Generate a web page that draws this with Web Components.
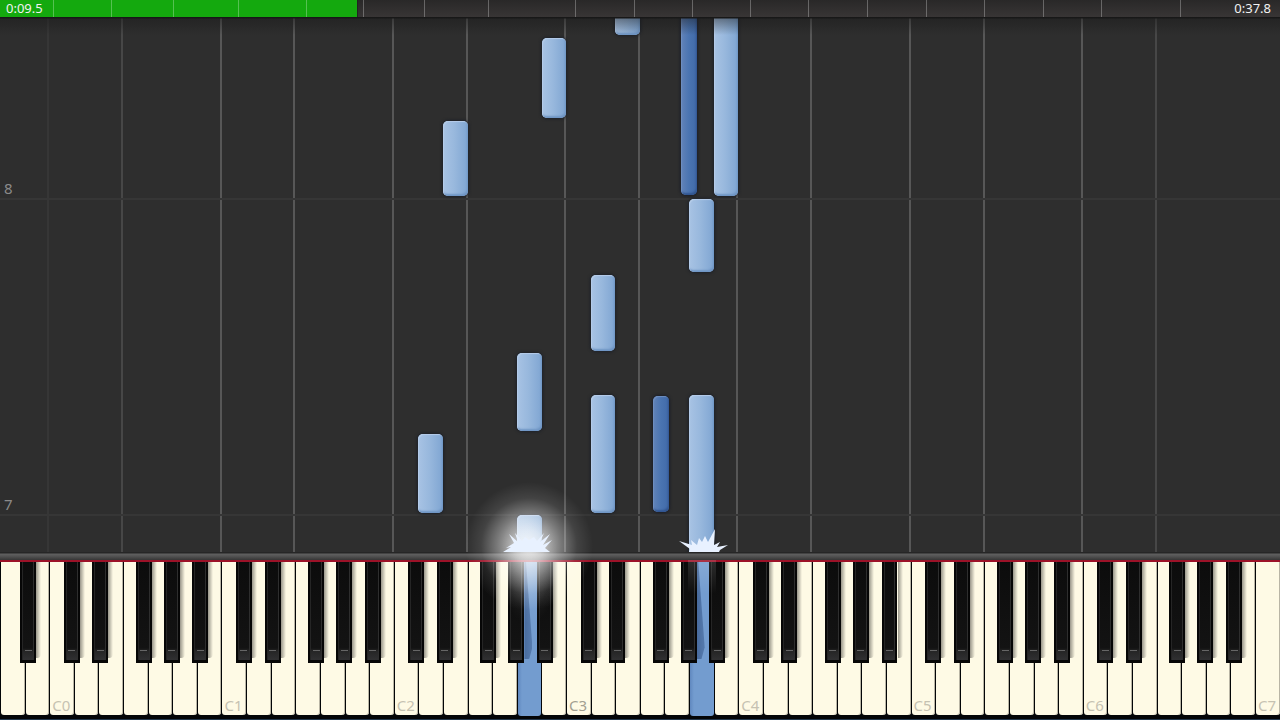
<!DOCTYPE html>
<html lang="en">
<head>
<meta charset="utf-8">
<title>Piano roll</title>
<style>
	body {
		margin: 0;
		background: #000;
		font-family: "Noto Sans", "Open Sans", sans-serif;
	}
</style>
</head>
<body>
<piano-player></piano-player>

<script>
const WHITE_KEYS = 52;
const NAMES = ['A', 'B', 'C', 'D', 'E', 'F', 'G'];
// where a sharp starts, as a share of the white key before it
const SHARPS = { C: 0.59, D: 0.75, F: 0.52, G: 0.66, A: 0.82 };

const keyName = (i) => NAMES[i % 7];
const toPercent = (keys) => `${(keys / WHITE_KEYS) * 100}%`;

class SongTimeline extends HTMLElement {
	constructor() {
		super();
		this.attachShadow({ mode: 'open' });
		const marks = [53, 111, 173, 238, 306, 363, 424, 488, 575, 634, 692,
			750, 808, 867, 926, 984, 1043, 1101, 1180];
		this.shadowRoot.innerHTML = `
			<style>
				:host {
					display: grid;
					height: 17px;
					color: #f2f2f2;
					font-size: 13px;
					line-height: 16px;
				}
				progress, svg, .times { grid-area: 1 / 1; width: 100%; height: 17px; }
				progress {
					appearance: none;
					border: 0;
					background: linear-gradient(#292828, #383535);
				}
				progress::-webkit-progress-bar { background: linear-gradient(#292828, #383535); }
				progress::-webkit-progress-value { background: #14a90e; border-right: 1px solid #222; }
				line { stroke: #fff; stroke-opacity: 0.28; }
				.times {
					display: flex;
					justify-content: space-between;
					box-sizing: border-box;
					padding: 0 9px 0 6px;
				}
			</style>
			<progress max="1280" value="358" aria-label="Song position"></progress>
			<svg viewBox="0 0 1280 17" preserveAspectRatio="none" aria-hidden="true">
				${marks.map((x) => `<line x1="${x + 0.5}" x2="${x + 0.5}" y1="0" y2="17"/>`).join('')}
			</svg>
			<div class="times"><span>${this.getAttribute('elapsed')}</span><span>${this.getAttribute('total')}</span></div>
		`;
	}
}

class RollNote extends HTMLElement {
	constructor() {
		super();
		this.attachShadow({ mode: 'open' });
		this.shadowRoot.innerHTML = `
			<style>
				:host {
					position: absolute;
					box-sizing: border-box;
					width: ${toPercent(1)};
					border-radius: 5px;
					background: linear-gradient(90deg, #a8c3e4, #98b8dd 45%, #7fa5d2);
					box-shadow: inset 1px 1px 1px #b6cdea, inset -1px -2px 2px #6f95c4, 0 0 3px 1px #1d2129;
				}
				:host([sharp]) {
					width: ${toPercent(0.65)};
					background: linear-gradient(90deg, #6283b8, #4a74b1 50%, #416aa9);
					box-shadow: inset 1px 1px 1px #6f8fc0, inset -1px -2px 2px #315590, 0 0 3px 1px #1b1e28;
				}
				:host([held]) {
					border-bottom-left-radius: 0;
					border-bottom-right-radius: 0;
				}
			</style>
		`;
	}

	connectedCallback() {
		const key = Number(this.getAttribute('key'));
		const sharp = this.hasAttribute('sharp') ? SHARPS[keyName(key)] : 0;
		this.style.left = toPercent(key + sharp);
		this.style.bottom = `${this.getAttribute('from')}px`;
		this.style.height = `${this.getAttribute('length')}px`;
	}
}

class NoteRoll extends HTMLElement {
	constructor() {
		super();
		this.attachShadow({ mode: 'open' });
		this.shadowRoot.innerHTML = `
			<style>
				:host {
					display: block;
					position: relative;
					overflow: hidden;
					background: #2e2e2e;
				}
				:host::after {
					content: '';
					position: absolute;
					inset: 0 0 auto;
					height: 18px;
					background: linear-gradient(#181818 1px, #18181870 2px, #18181800);
				}
				.lane {
					position: absolute;
					top: 0;
					bottom: 0;
					width: 2px;
					margin-left: -2px;
					background: #575757;
				}
				.lane.dim { background: #363636; }
				.lane.soft { background: #474747; }
				.bar {
					position: absolute;
					left: 0;
					right: 0;
					padding-left: 4px;
					border-bottom: 2px solid #363636;
					color: #8a8a8a;
					font-size: 15px;
					line-height: 20px;
				}
			</style>
			<div id="lanes"></div>
			<div class="bar" style="bottom: 352px">8</div>
			<div class="bar" style="bottom: 36px">7</div>
			<slot></slot>
		`;
	}

	connectedCallback() {
		const lanes = this.shadowRoot.querySelector('#lanes');
		for (let i = 1; i < WHITE_KEYS - 2; i++) {
			if (keyName(i) !== 'C' && keyName(i) !== 'F') continue;
			const lane = document.createElement('div');
			lane.className = i === 2 ? 'lane dim' : i === 5 || i > 46 ? 'lane soft' : 'lane';
			lane.style.left = toPercent(i);
			lanes.appendChild(lane);
		}
	}
}

class KeyRail extends HTMLElement {
	constructor() {
		super();
		this.attachShadow({ mode: 'open' });
		this.shadowRoot.innerHTML = `
			<style>
				:host {
					display: block;
					height: 8px;
					background: linear-gradient(#262626 1px, #606060 2px, #545454 4px, #363636);
				}
			</style>
		`;
	}
}

class PianoKey extends HTMLElement {
	constructor() {
		super();
		this.attachShadow({ mode: 'open' });
		this.shadowRoot.innerHTML = `
			<style>
				:host {
					flex: 1 1 0;
					display: flex;
					position: relative;
					min-width: 0;
				}
				button { border: 0; padding: 0; font: inherit; }
				.white {
					flex: 1;
					display: flex;
					align-items: flex-end;
					margin-left: 1px;
					padding: 0 0 0 2px;
					min-width: 0;
					border-radius: 0 0 3px 3px;
					background: #fefae5;
					box-shadow: inset -1px 0 #b9b5a5;
					color: #c6c2b2;
					font-size: 15px;
					line-height: 20px;
				}
				:host([middle]) .white { color: #a29f91; }
				:host([pressed]) .white {
					margin-bottom: -1px;
					background: linear-gradient(90deg, #6088bf, #739ccf 4px);
					box-shadow: none;
				}
				.black {
					position: absolute;
					z-index: 1;
					top: 0;
					left: calc(var(--start) * 100%);
					width: 65%;
					height: 101px;
					border: solid #060606;
					border-width: 0 2px 3px;
					background:
						linear-gradient(#666, #666) 50% 88px / 7px 1px no-repeat,
						linear-gradient(#0c0c0c 0, #131313 86px, #252525 89px, #303032);
					box-shadow: inset 1px 0 #252525, inset -1px 0 #2e2e2e;
				}
				/* soft shade that falls on the white key to the right */
				.shade {
					position: absolute;
					z-index: 1;
					top: 0;
					left: calc(var(--start) * 100% + 65%);
					width: 5px;
					height: 96px;
					border-bottom-right-radius: 4px;
					background: linear-gradient(90deg, #0006, #0000);
				}
				:host([shaded]) .shade {
					width: 8px;
					height: 97px;
					background: linear-gradient(90deg, #2b4a7c99, #2b4a7c66);
					clip-path: polygon(0 0, 20% 0, 100% 88%, 60% 100%, 0 100%);
				}
			</style>
			<button type="button" class="white"></button>
		`;
	}

	connectedCallback() {
		const note = this.getAttribute('note');
		const white = this.shadowRoot.querySelector('.white');
		white.textContent = this.getAttribute('label') || '';
		white.setAttribute('aria-label', this.getAttribute('label') || note);

		if (this.hasAttribute('sharp')) {
			this.style.setProperty('--start', SHARPS[note]);
			const shade = document.createElement('div');
			shade.className = 'shade';
			const black = document.createElement('button');
			black.type = 'button';
			black.className = 'black';
			black.setAttribute('aria-label', `${note} sharp`);
			this.shadowRoot.append(shade, black);
		}
	}
}

class PianoKeyboard extends HTMLElement {
	constructor() {
		super();
		this.attachShadow({ mode: 'open' });
		this.shadowRoot.innerHTML = `
			<style>
				:host {
					display: flex;
					box-sizing: border-box;
					height: 160px;
					border-top: 2px solid #9c1228;
					border-bottom: 1px solid #24384c;
					padding-bottom: 4px;
					background: #030507;
				}
			</style>
		`;
	}

	connectedCallback() {
		const pressed = this.getAttribute('pressed').split(' ').map(Number);
		for (let i = 0; i < WHITE_KEYS; i++) {
			const key = document.createElement('piano-key');
			const note = keyName(i);
			key.setAttribute('note', note);
			if (note === 'C') key.setAttribute('label', `C${(i - 2) / 7}`);
			if (i === 23) key.setAttribute('middle', '');
			if (note in SHARPS && i < WHITE_KEYS - 1) key.setAttribute('sharp', '');
			if (pressed.includes(i)) key.setAttribute('pressed', '');
			if (pressed.includes(i + 1)) key.setAttribute('shaded', '');
			this.shadowRoot.appendChild(key);
		}
	}
}

// Light where a note meets the keys, its box is centred on the struck key.
class KeySpark extends HTMLElement {
	constructor() {
		super();
		this.attachShadow({ mode: 'open' });
		const fresh = this.hasAttribute('fresh');
		const burst = fresh
			? 'M54 80L62 75L57 76L65 71L60 62L69 70L66 61L73 69L76 65L80 68L85 65L88 69L95 61L91 70L101 62L94 73L103 68L96 76L101 80Z'
			: 'M67 80L68 77L57 69L70 73L69 68L75 73L77 66L80 70L83 64L86 70L93 57L92 73L98 70L95 75L106 73L98 78L97 80Z';
		this.shadowRoot.innerHTML = `
			<style>
				:host {
					position: absolute;
					z-index: 2;
					bottom: 88px;
					width: 160px;
					height: 160px;
					margin-left: -80px;
					pointer-events: none;
				}
				svg { display: block; }
			</style>
			<svg width="160" height="160" viewBox="0 0 160 160" aria-hidden="true">
				<defs>
					<radialGradient id="halo">
						<stop offset="0" stop-color="#fff" stop-opacity="0.85"/>
						<stop offset="0.25" stop-color="#fff" stop-opacity="0.65"/>
						<stop offset="0.5" stop-color="#fff" stop-opacity="0.36"/>
						<stop offset="0.75" stop-color="#fff" stop-opacity="0.1"/>
						<stop offset="1" stop-color="#fff" stop-opacity="0"/>
					</radialGradient>
					<linearGradient id="flow" x2="0" y2="1">
						<stop offset="0" stop-color="#fff" stop-opacity="0.35"/>
						<stop offset="1" stop-color="#fff" stop-opacity="0"/>
					</linearGradient>
				</defs>
				${fresh ? `
				<circle cx="80" cy="74" r="64" fill="url(#halo)"/>
				<ellipse cx="80" cy="94" rx="30" ry="58" fill="url(#halo)" opacity="0.3"/>` : `
				<rect x="66" y="88" width="28" height="34" fill="url(#flow)" opacity="0.4"/>`}
				<path d="${burst}" fill="#e8f1ff"/>
			</svg>
		`;
	}

	connectedCallback() {
		this.style.left = toPercent(Number(this.getAttribute('key')) + 0.5);
	}
}

class PianoPlayer extends HTMLElement {
	constructor() {
		super();
		this.attachShadow({ mode: 'open' });
		this.shadowRoot.innerHTML = `
			<style>
				:host {
					display: flex;
					flex-direction: column;
					position: relative;
					height: 100vh;
					overflow: hidden;
				}
				note-roll { flex: 1; }
			</style>
			<song-timeline elapsed="0:09.5" total="0:37.8"></song-timeline>
			<note-roll>
				<roll-note key="25" from="517" length="40"></roll-note>
				<roll-note key="22" from="434" length="80"></roll-note>
				<roll-note key="18" from="356" length="75"></roll-note>
				<roll-note key="27" from="357" length="200" sharp></roll-note>
				<roll-note key="29" from="356" length="200"></roll-note>
				<roll-note key="28" from="280" length="73"></roll-note>
				<roll-note key="24" from="201" length="76"></roll-note>
				<roll-note key="21" from="121" length="78"></roll-note>
				<roll-note key="24" from="39" length="118"></roll-note>
				<roll-note key="26" from="40" length="116" sharp></roll-note>
				<roll-note key="17" from="39" length="79"></roll-note>
				<roll-note key="28" from="0" length="157" held></roll-note>
				<roll-note key="21" from="0" length="37" held></roll-note>
			</note-roll>
			<key-rail></key-rail>
			<piano-keyboard pressed="21 28"></piano-keyboard>
			<key-spark key="21" fresh></key-spark>
			<key-spark key="28"></key-spark>
		`;
	}
}

customElements.define('song-timeline', SongTimeline);
customElements.define('roll-note', RollNote);
customElements.define('note-roll', NoteRoll);
customElements.define('key-rail', KeyRail);
customElements.define('piano-key', PianoKey);
customElements.define('piano-keyboard', PianoKeyboard);
customElements.define('key-spark', KeySpark);
customElements.define('piano-player', PianoPlayer);
</script>
</body>
</html>
